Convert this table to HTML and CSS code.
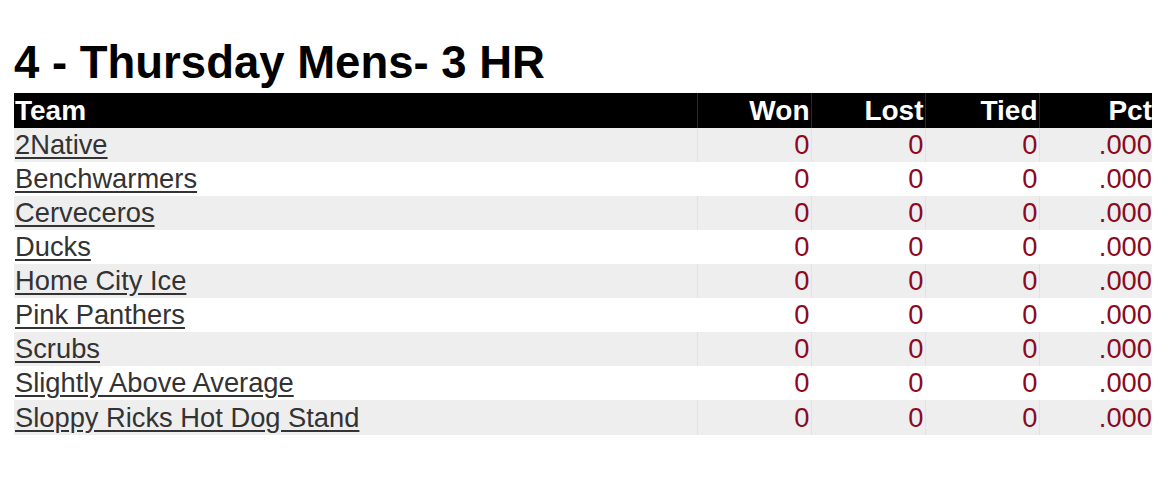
FILE: index.html
```html
<!DOCTYPE html>
<html>
<head>
<meta charset="utf-8">
<link rel="stylesheet" href="styles.css">
</head>
<body>
<h1 class="title">4 - Thursday Mens- 3 HR</h1>
<table class="standings">
<colgroup>
<col class="c-team"><col class="c-num"><col class="c-num"><col class="c-num"><col class="c-pct">
</colgroup>
<thead>
<tr><th class="team">Team</th><th>Won</th><th>Lost</th><th>Tied</th><th>Pct</th></tr>
</thead>
<tbody>
<tr><td class="team"><a href="#">2Native</a></td><td>0</td><td>0</td><td>0</td><td>.000</td></tr>
<tr><td class="team"><a href="#">Benchwarmers</a></td><td>0</td><td>0</td><td>0</td><td>.000</td></tr>
<tr><td class="team"><a href="#">Cerveceros</a></td><td>0</td><td>0</td><td>0</td><td>.000</td></tr>
<tr><td class="team"><a href="#">Ducks</a></td><td>0</td><td>0</td><td>0</td><td>.000</td></tr>
<tr><td class="team"><a href="#">Home City Ice</a></td><td>0</td><td>0</td><td>0</td><td>.000</td></tr>
<tr><td class="team"><a href="#">Pink Panthers</a></td><td>0</td><td>0</td><td>0</td><td>.000</td></tr>
<tr><td class="team"><a href="#">Scrubs</a></td><td>0</td><td>0</td><td>0</td><td>.000</td></tr>
<tr><td class="team"><a href="#">Slightly Above Average</a></td><td>0</td><td>0</td><td>0</td><td>.000</td></tr>
<tr><td class="team"><a href="#">Sloppy Ricks Hot Dog Stand</a></td><td>0</td><td>0</td><td>0</td><td>.000</td></tr>
</tbody>
</table>
</body>
</html>
```
FILE: styles.css
```css
html, body {
  margin: 0;
  padding: 0;
  background: #ffffff;
}
body {
  padding: 40px 14px 0 14px;
  font-family: "Liberation Sans", Arial, sans-serif;
}
.title {
  margin: 0 0 7px 0;
  font-size: 45.5px;
  line-height: 46px;
  font-weight: bold;
  color: #000;
}
.standings {
  width: 1138px;
  table-layout: fixed;
  border-collapse: collapse;
  border-spacing: 0;
  font-size: 27.3px;
}
.c-team { width: 683px; }
.c-num { width: 114px; }
.c-pct { width: 113px; }
.standings th {
  background: #000;
  color: #fff;
  font-weight: bold;
  font-size: 28px;
  text-align: right;
  height: 35px;
  line-height: 35px;
  padding: 0 1px 0 0;
  border-left: 1px solid #2a2a2a;
  white-space: nowrap;
}
.standings th.team {
  text-align: left;
  padding-left: 1px;
  border-left: none;
}
.standings td {
  height: 34px;
  line-height: 34px;
  padding: 0 1px 0 0;
  text-align: right;
  color: #8a0a22;
  border-left: 1px solid #e2e2e2;
  white-space: nowrap;
}
.standings td:last-child,
.standings th:last-child {
  padding-right: 0;
}
.standings td.team {
  text-align: left;
  padding-left: 1px;
  border-left: none;
}
.standings tbody tr:nth-child(odd) td {
  background: #eeeeee;
}
.standings tbody tr:nth-child(even) td {
  background: #ffffff;
  border-left-color: #ffffff;
}
.standings tbody tr:last-child td {
  height: 35px;
}
.standings a {
  color: #333333;
  text-decoration: underline;
  text-underline-offset: 3px;
}
```
